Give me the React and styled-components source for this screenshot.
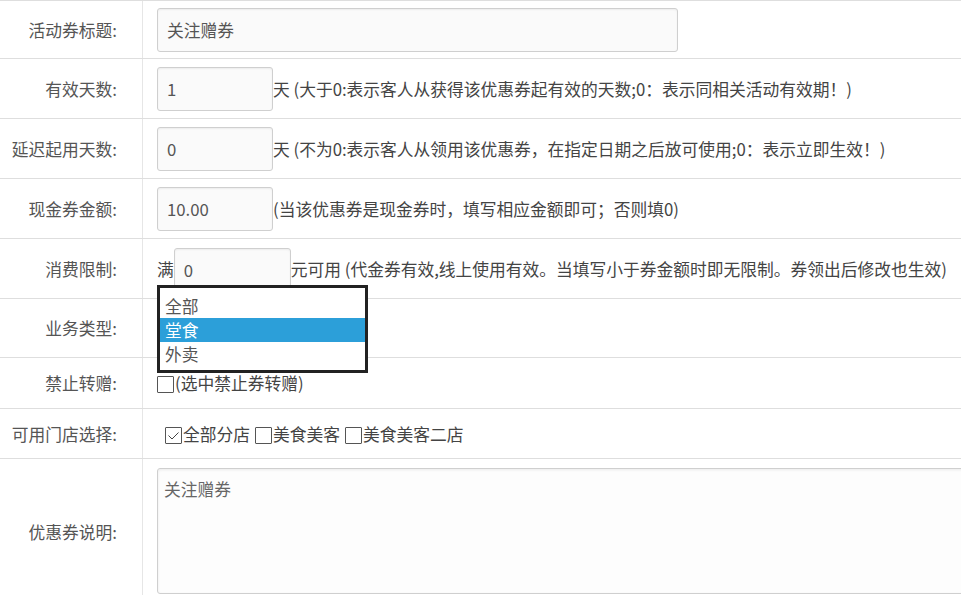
import React from "react";
import styled, { createGlobalStyle } from "styled-components";

const GlobalStyle = createGlobalStyle`
  html, body {
    margin: 0;
    padding: 0;
    background: #ffffff;
    overflow: hidden;
  }
  body {
    font-family: "Noto Sans CJK SC", "Noto Sans", sans-serif;
    font-size: 16.75px;
    color: #444;
  }
  * {
    box-sizing: border-box;
  }
`;

const App = () => {
  return (
    <>
      <GlobalStyle />
      <Form>
        <Row $h={58}>
          <Label>活动券标题:</Label>
          <Field>
            <TextInput $w={521} defaultValue="关注赠券" />
          </Field>
        </Row>
        <Row $h={60}>
          <Label>有效天数:</Label>
          <Field>
            <TextInput $w={116} defaultValue="1" />
            <Hint>天 (大于0:表示客人从获得该优惠券起有效的天数;0：表示同相关活动有效期！)</Hint>
          </Field>
        </Row>
        <Row $h={60}>
          <Label>延迟起用天数:</Label>
          <Field>
            <TextInput $w={116} defaultValue="0" />
            <Hint>天 (不为0:表示客人从领用该优惠券，在指定日期之后放可使用;0：表示立即生效！)</Hint>
          </Field>
        </Row>
        <Row $h={60}>
          <Label>现金券金额:</Label>
          <Field>
            <TextInput $w={116} defaultValue="10.00" />
            <Hint>(当该优惠券是现金券时，填写相应金额即可；否则填0)</Hint>
          </Field>
        </Row>
        <Row $h={60}>
          <Label>消费限制:</Label>
          <Field>
            <Hint>满</Hint>
            <TextInput $w={117} $shift={3} defaultValue="0" />
            <Hint>元可用 (代金券有效,线上使用有效。当填写小于券金额时即无限制。券领出后修改也生效)</Hint>
          </Field>
        </Row>
        <Row $h={59}>
          <Label>业务类型:</Label>
          <Field>
            <Dropdown>
              <Option>全部</Option>
              <Option $active>堂食</Option>
              <Option>外卖</Option>
            </Dropdown>
          </Field>
        </Row>
        <Row $h={51}>
          <Label>禁止转赠:</Label>
          <Field>
            <CheckItem>
              <Box />
              (选中禁止券转赠)
            </CheckItem>
          </Field>
        </Row>
        <Row $h={50}>
          <Label>可用门店选择:</Label>
          <Field $indent={8}>
            <CheckItem>
              <Box>
                <svg width="15" height="15" viewBox="0 0 15 15">
                  <polyline
                    points="2.5,7.5 6,11 12.5,4.5"
                    fill="none"
                    stroke="#444"
                    strokeWidth="1"
                  />
                </svg>
              </Box>
              全部分店
            </CheckItem>
            <CheckItem>
              <Box />
              美食美客
            </CheckItem>
            <CheckItem>
              <Box />
              美食美客二店
            </CheckItem>
          </Field>
        </Row>
        <Row $h={147}>
          <Label>优惠券说明:</Label>
          <Field $top>
            <Memo defaultValue="关注赠券" />
          </Field>
        </Row>
      </Form>
    </>
  );
};

export default App;

const Form = styled.div`
  width: 961px;
  overflow: hidden;
`;

const Row = styled.div`
  display: flex;
  height: ${(p) => p.$h}px;
  border-top: 1px solid #dedede;
`;

const Label = styled.div`
  flex: none;
  width: 143px;
  display: flex;
  align-items: center;
  justify-content: flex-end;
  padding-right: 25px;
  border-right: 1px solid #e6e6e6;
  color: #555;
  white-space: nowrap;
`;

const Field = styled.div`
  position: relative;
  flex: 1;
  min-width: 0;
  display: flex;
  align-items: ${(p) => (p.$top ? "flex-start" : "center")};
  padding-left: ${(p) => 14 + (p.$indent || 0)}px;
  padding-top: ${(p) => (p.$top ? 9 : 0)}px;
  white-space: nowrap;
`;

const TextInput = styled.input`
  flex: none;
  width: ${(p) => p.$w}px;
  height: 44px;
  margin-top: ${(p) => p.$shift || 0}px;
  padding: 0 9px;
  border: 1px solid #cfcfcf;
  border-radius: 3px;
  background: #fafafa;
  box-shadow: inset 0 1px 2px rgba(0, 0, 0, 0.06);
  font-family: inherit;
  font-size: 16.75px;
  color: #555;
  outline: none;
`;

const Hint = styled.span`
  color: #444;
`;

const Dropdown = styled.div`
  position: absolute;
  left: 14px;
  top: -14px;
  width: 211px;
  padding: 6px 0 4px;
  border: 3px solid #222;
  background: #fff;
  z-index: 2;
`;

const Option = styled.div`
  height: 24px;
  line-height: 24px;
  padding-left: 5px;
  color: ${(p) => (p.$active ? "#fff" : "#555")};
  background: ${(p) => (p.$active ? "#2c9fd9" : "transparent")};
`;

const CheckItem = styled.label`
  display: inline-flex;
  align-items: center;
  margin-right: 5px;
  color: #444;
`;

const Box = styled.span`
  display: inline-flex;
  align-items: center;
  justify-content: center;
  width: 17px;
  height: 17px;
  margin-top: 3px;
  margin-right: 1px;
  border: 1px solid #555;
  border-radius: 1px;
  background: #fff;
`;

const Memo = styled.textarea`
  flex: none;
  width: 900px;
  height: 126px;
  padding: 8px 6px;
  border: 1px solid #cfcfcf;
  border-radius: 3px;
  background: #fdfdfd;
  box-shadow: inset 0 1px 3px rgba(0, 0, 0, 0.08);
  font-family: inherit;
  font-size: 16.75px;
  color: #666;
  resize: none;
  outline: none;
`;
